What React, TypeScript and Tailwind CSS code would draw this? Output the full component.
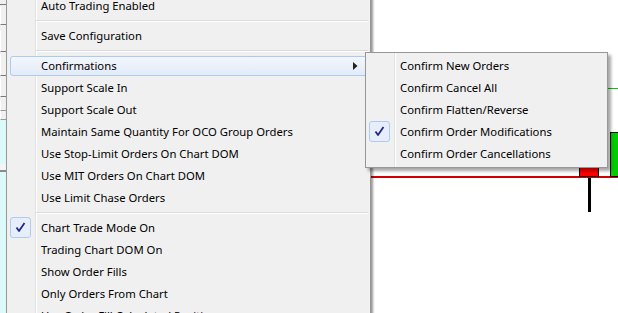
import React from 'react';

type Item = { label?: string; sep?: boolean; checked?: boolean; sub?: boolean; hot?: boolean };

const MAIN_ITEMS: Item[] = [
  { label: 'Auto Trading Enabled' },
  { sep: true },
  { label: 'Save Configuration' },
  { sep: true },
  { label: 'Confirmations', sub: true, hot: true },
  { label: 'Support Scale In' },
  { label: 'Support Scale Out' },
  { label: 'Maintain Same Quantity For OCO Group Orders' },
  { label: 'Use Stop-Limit Orders On Chart DOM' },
  { label: 'Use MIT Orders On Chart DOM' },
  { label: 'Use Limit Chase Orders' },
  { sep: true },
  { label: 'Chart Trade Mode On', checked: true },
  { label: 'Trading Chart DOM On' },
  { label: 'Show Order Fills' },
  { label: 'Only Orders From Chart' },
  { label: 'Use Order Fill Calculated Positions' },
];

const SUB_ITEMS: Item[] = [
  { label: 'Confirm New Orders' },
  { label: 'Confirm Cancel All' },
  { label: 'Confirm Flatten/Reverse' },
  { label: 'Confirm Order Modifications', checked: true },
  { label: 'Confirm Order Cancellations' },
];

const CheckMark = () => (
  <div className="absolute left-[3px] top-0 w-[21px] h-[21px] rounded-[3px] border border-[#aecbf0] bg-[#e7eef9] flex items-center justify-center">
    <svg width="11" height="11" viewBox="0 0 11 11">
      <path d="M1.5 5.5 L4 9 L9.5 1" fill="none" stroke="#1d2a8a" strokeWidth="1.8" strokeLinejoin="round" />
    </svg>
  </div>
);

const MenuRow = ({ item }: { item: Item }) => {
  if (item.sep) {
    return (
      <div className="h-[8px] flex items-center pl-[29px] pr-[2px]">
        <div className="w-full h-[2px] border-t border-[#dadada] border-b border-b-white" />
      </div>
    );
  }
  return (
    <div className="relative h-[22px] flex items-center">
      {item.hot && (
        <div className="absolute left-[3px] right-[2px] top-[1px] bottom-[1px] rounded-[3px] border border-[#aacbf3] bg-gradient-to-b from-[#f3f7fc] to-[#e3ebf7]" />
      )}
      {item.checked && <CheckMark />}
      <span className="relative pl-[34px] whitespace-nowrap text-black">{item.label}</span>
      {item.sub && (
        <svg className="absolute right-[12px] top-[7px]" width="5" height="8" viewBox="0 0 5 8">
          <path d="M0 0 L4.5 4 L0 8 Z" fill="#202020" />
        </svg>
      )}
    </div>
  );
};

const Gutter = () => (
  <div className="absolute left-[28px] top-0 bottom-0 w-[2px] border-l border-[#e2e2e2] border-r border-r-white" />
);

const LeftStrip = () => (
  <div className="w-[6px] h-full flex flex-col bg-[#f0f0f0]">
    <div className="h-[5px] border-b border-[#7a7a7a]" />
    <div className="h-[18px] border-l border-white border-b border-b-[#7a7a7a] mt-[2px]" />
    <div className="h-[22px] border-l border-white border-b border-b-[#7a7a7a] mt-[5px]" />
    <div className="h-[22px] border-l border-white border-b border-b-[#7a7a7a] mt-[2px]" />
    <div className="h-[19px] border-l border-white border-b border-b-[#7a7a7a] mt-[2px]" />
    <div className="h-[10px] border-l border-white border-b border-b-[#9a9a9a] mt-[4px]" />
    <div className="h-[9px] border-l border-white border-b border-b-[#9a9a9a]" />
    <div className="flex-1 bg-[#dcfafa] flex flex-col">
      <div className="h-[44px]" />
      <div className="h-[8px] bg-[#f4f4f4] border-b-2 border-[#8a8a8a]" />
    </div>
  </div>
);

const App = () => {
  return (
    <div
      className="relative w-[618px] h-[313px] overflow-hidden bg-white flex text-[11.3px] leading-none"
      style={{ fontFamily: '"Noto Sans", "Open Sans", Arial, sans-serif' }}
    >
      <LeftStrip />

      {/* main context menu */}
      <div className="relative z-10 w-[365px] h-[331px] -mt-[6px] bg-[#f0f0f0] border border-[#979797] shadow-[2px_2px_2px_rgba(0,0,0,0.4)]">
        <Gutter />
        <div className="relative">
          {MAIN_ITEMS.map((item, i) => (
            <MenuRow key={i} item={item} />
          ))}
        </div>
      </div>

      {/* chart area */}
      <div className="relative flex-1 bg-white">
        <div className="absolute left-0 right-0 top-[176px] h-[2px] bg-[#d40000]" />
        <div className="absolute left-[208px] top-[160px] w-[20px] h-[17px] bg-[#ff0000] border border-black" />
        <div className="absolute left-[217px] top-[178px] w-[3px] h-[34px] bg-black" />
        <div className="absolute left-[239px] top-[132px] w-[20px] h-[45px] bg-[#00cc00] border border-black" />
        <div className="absolute left-[236px] top-[88px] right-0 h-[1px] bg-[#00cc00]" />
      </div>

      {/* submenu */}
      <div className="absolute z-20 left-[365px] top-[52px] w-[243px] py-[2px] bg-[#f0f0f0] border border-[#979797] shadow-[3px_3px_3px_rgba(0,0,0,0.35)]">
        <Gutter />
        <div className="relative">
          {SUB_ITEMS.map((item, i) => (
            <MenuRow key={i} item={item} />
          ))}
        </div>
      </div>
    </div>
  );
};

export default App;
